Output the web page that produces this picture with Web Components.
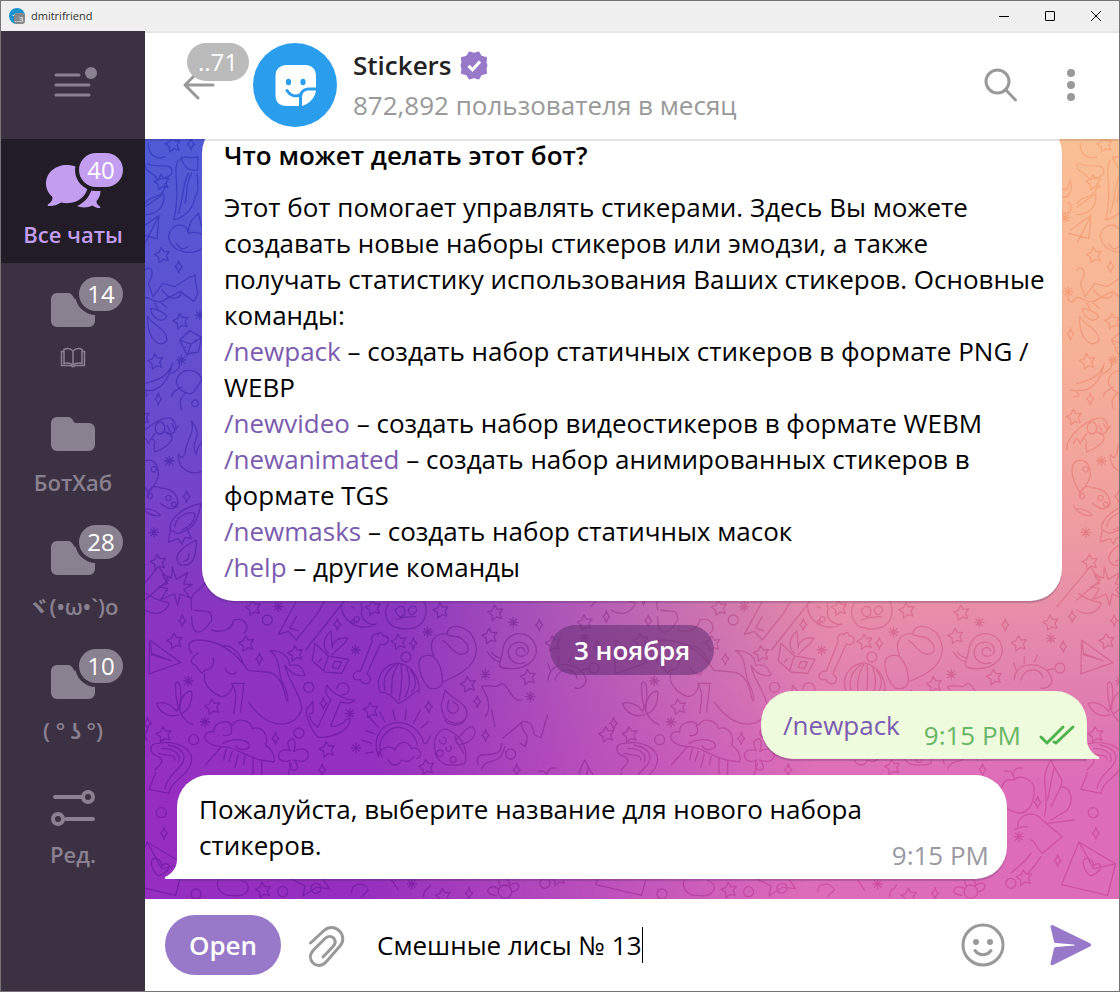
<!DOCTYPE html>
<html lang="ru">
<head>
<meta charset="utf-8">
<meta name="viewport" content="width=device-width, initial-scale=1">
<title>dmitrifriend</title>
<style>
    :root{
        --accent: #9878c8;
        --link: #7b5bb0;
        --muted: #999999;
        --side: #3b3142;
        --side-active: #211c26;
        --side-fg: #8a8190;
        --line: #e6e6e6;
        --text: 26px;
        --row: 36px;
    }
    body{
        margin: 0;
        font-family: "Open Sans", "Noto Sans", "Noto Sans CJK JP", sans-serif;
        font-size: var(--text);
        line-height: var(--row);
        color: #000;
    }
</style>
</head>
<body>
<tg-window>
    <tg-titlebar slot="title">dmitrifriend</tg-titlebar>
    <tg-sidebar slot="side">
        <tg-folder icon="chats" count="40" active>Все чаты</tg-folder>
        <tg-folder icon="folder" count="14"><tg-icon name="book" role="img" aria-label="Книги"></tg-icon></tg-folder>
        <tg-folder icon="folder">БотХаб</tg-folder>
        <tg-folder icon="folder" count="28">ヾ(•ω•`)o</tg-folder>
        <tg-folder icon="folder" count="10">( ° ʖ °)</tg-folder>
        <tg-folder icon="edit">Ред.</tg-folder>
    </tg-sidebar>
    <tg-header slot="head" unread="..71">
        Stickers
        <span slot="status">872,892 пользователя в месяц</span>
    </tg-header>
    <tg-chat>
        <tg-about>
            <span slot="title">Что может делать этот бот?</span>
            Этот бот помогает управлять стикерами. Здесь Вы можете создавать новые наборы стикеров или эмодзи, а также получать статистику использования Ваших стикеров. Основные команды:<br>
            <tg-command>/newpack</tg-command> – создать набор статичных стикеров в формате PNG / WEBP<br>
            <tg-command>/newvideo</tg-command> – создать набор видеостикеров в формате WEBM<br>
            <tg-command>/newanimated</tg-command> – создать набор анимированных стикеров в формате TGS<br>
            <tg-command>/newmasks</tg-command> – создать набор статичных масок<br>
            <tg-command>/help</tg-command> – другие команды
        </tg-about>
        <tg-date>3 ноября</tg-date>
        <tg-message out time="9:15 PM"><tg-command>/newpack</tg-command></tg-message>
        <tg-message time="9:15 PM">Пожалуйста, выберите название для нового набора стикеров.</tg-message>
    </tg-chat>
    <tg-composer slot="foot" value="Смешные лисы № 13"></tg-composer>
</tg-window>

<script>
const icons = {
    app: [16, 16, `<circle cx="8" cy="8" r="8" fill="#1b93d1"/><path d="M3 8l5-3v3z" fill="#fff"/><rect x="5" y="5" width="11" height="11" rx="3" fill="#85898c"/><text x="10" y="14" font-size="8" text-anchor="middle" fill="#fff">..3</text>`],
    minimize: [10, 10, `<path d="M0 5.5h10" stroke="#000" fill="none"/>`],
    maximize: [10, 10, `<rect x=".5" y=".5" width="9" height="9" rx=".5" stroke="#000" fill="none"/>`],
    close: [10, 10, `<path d="M0 0l10 10M10 0L0 10" stroke="#000" fill="none"/>`],
    menu: [38, 38, `<path d="M2 9h23M2 19h33M2 29h33" fill="none" stroke="currentColor" stroke-width="3" stroke-linecap="round"/><circle cx="37" cy="7" r="6" fill="currentColor"/>`],
    chats: [54, 44, `<path fill="currentColor" d="M21 1C9 1 0 9 0 19.500c0 6 3 10.500 6.500 13.500.5 3-1.500 5-4.500 7.500-1 1 0 1.500 1 1.500 5 0 8.500-1 12-3.500 2 .5 4 .7 6 .7 12 0 21-8.500 21-19.200S33 1 21 1z"/><path fill="currentColor" d="M54.500 27c0-2-.5-4-1-5l-7-1c-1 10-8 18-15.500 21 4 2 11 2 15.500-.5 2.500 2 5 2.500 7.500 2.500.5 0 .5-1-.2-1.500-2-1.500-3.500-3-3.300-5.500 2.500-2.500 4-6 4-10z"/>`],
    folder: [44, 34, `<path fill="currentColor" d="M6 0h11c2 0 3 .7 4 2l2 3c.6.700 1 1 2 1h13a6 6 0 0 1 6 6v16a6 6 0 0 1-6 6H6a6 6 0 0 1-6-6V6a6 6 0 0 1 6-6z"/>`],
    edit: [44, 34, `<g fill="none" stroke="currentColor" stroke-width="4" stroke-linecap="round"><path d="M4 8h27M15 30h27"/><circle cx="37" cy="8" r="5"/><circle cx="7" cy="30" r="5"/></g>`],
    book: [26, 20, `<g fill="none" stroke="currentColor" stroke-width="1.500"><path d="M13 3C10 0 6 .5 4 1.500v14c3-1 6-1 9 1.500 3-2.500 6-2.500 9-1.500v-14C20 .5 16 0 13 3zM13 3v14"/><path d="M4 3.500H1.500v14H11c1 1.500 3 1.500 4 0h9.500v-14H22"/></g>`],
    back: [32, 30, `<path d="M30 15H2M15 2L2 15l13 13" fill="none" stroke="#999" stroke-width="3" stroke-linecap="round" stroke-linejoin="round"/>`],
    sticker: [84, 84, `<circle cx="42" cy="42" r="42" fill="#2a9eed"/><path fill="#fff" d="M34 22h18c7 0 11 4 11 11v11.500h-7c-6 0-10 4-10 9.500v9H34c-8 0-11.500-4-11.500-11V33c0-7 4.500-11 11.500-11z"/><path fill="#fff" d="M63 47.500C62 55 56 61 49 63v-8.500c0-4.500 2.500-7 7-7z"/><ellipse cx="35.500" cy="39" rx="2.600" ry="3.300" fill="#2a9eed"/><ellipse cx="50" cy="39" rx="2.600" ry="3.300" fill="#2a9eed"/><path d="M34 47.500c3 5 8 6.500 13 4.500" fill="none" stroke="#2a9eed" stroke-width="3" stroke-linecap="round"/>`],
    verified: [28, 28, `<path fill="var(--accent)" stroke="var(--accent)" stroke-width="2" stroke-linejoin="round" d="M9.500 1.500l4 1.200h1l4-1.200 2.600 4.300 5 1.200-.6 4.500 1 3-1 3 .6 4.500-5 1.200-2.600 4.300-4-1.200h-1l-4 1.200-2.600-4.300-5-1.200.6-4.500-1-3 1-3-.6-4.500 5-1.200z"/><path d="M8.500 14.800l4 4 7.500-8.300" fill="none" stroke="#fff" stroke-width="3.200"/>`],
    search: [34, 34, `<circle cx="13.500" cy="13.500" r="11.500" fill="none" stroke="#999" stroke-width="3"/><path d="M21.500 21.500l10 10.500" stroke="#999" stroke-width="3" stroke-linecap="round"/>`],
    more: [8, 32, `<g fill="#999"><circle cx="4" cy="4" r="4"/><circle cx="4" cy="16" r="4"/><circle cx="4" cy="28" r="4"/></g>`],
    checks: [36, 20, `<path d="M2 12l6 6L24 2M15 17l2 1L34 2" fill="none" stroke="#4fb34e" stroke-width="3" stroke-linecap="round" stroke-linejoin="round"/>`],
    clip: [34, 38, `<path d="M2.500 17L16 4.500c5-4.500 11.500-3.500 15.500.5s4.500 10.500.5 15L18 36c-4.500 5-10 4-13 1s-4-8 .5-13L17 12.500c3-3 6.500-2.500 8.500-.5s2.500 5-.5 8.500L15 31" fill="none" stroke="#999" stroke-width="3" stroke-linecap="round" stroke-linejoin="round"/>`],
    smile: [44, 44, `<circle cx="22" cy="22" r="20" fill="none" stroke="#999" stroke-width="3"/><circle cx="15" cy="19" r="3" fill="#999"/><circle cx="29" cy="19" r="3" fill="#999"/><path d="M14 27.500c4 5.500 12 5.500 16 0" fill="none" stroke="#999" stroke-width="3" stroke-linecap="round"/>`],
    send: [42, 42, `<path fill="var(--accent)" d="M3 1.200L40 19.300c1.500.8 1.500 2.500 0 3.300L3 40.900c-1.500.7-2.800-.3-2.400-2L4 24.500c.3-1 1-1.500 2-1.600l18-1.400c1-.1 1-.9 0-1L6 19c-1-.1-1.700-.5-2-1.600L.6 3.200C.2 1.600 1.500.5 3 1.200z"/>`],
    tailLeft: [12, 20, `<path fill="currentColor" d="M12 0c0 8-4 14-12 18v2h12z"/>`],
    tailRight: [12, 20, `<path fill="currentColor" d="M0 0c0 8 4 14 12 18v2H0z"/>`]
};

class Base extends HTMLElement {
    render(html) {
        this.attachShadow({mode: 'open'}).innerHTML = html;
    }
}

customElements.define('tg-icon', class extends Base {
    constructor() {
        super();
        const [w, h, body] = icons[this.getAttribute('name')];
        this.render(`
        <style>
            :host{ display: inline-block; flex: none; }
            svg{ display: block; overflow: visible; }
        </style>
        <svg width="${w}" height="${h}" viewBox="0 0 ${w} ${h}" aria-hidden="true">${body}</svg>
        `);
    }
});

customElements.define('tg-window', class extends Base {
    constructor() {
        super();
        this.render(`
        <style>
            :host{
                display: grid;
                box-sizing: border-box;
                height: 100vh;
                border: 1px solid #767476;
                grid-template: auto minmax(0, 1fr) / 144px minmax(0, 1fr);
            }
            .top{ grid-column: 1 / -1; }
            main{ display: flex; flex-direction: column; min-height: 0; }
        </style>
        <div class="top"><slot name="title"></slot></div>
        <slot name="side"></slot>
        <main>
            <slot name="head"></slot>
            <slot></slot>
            <slot name="foot"></slot>
        </main>
        `);
    }
});

customElements.define('tg-titlebar', class extends Base {
    constructor() {
        super();
        this.render(`
        <style>
            :host{
                display: flex;
                align-items: center;
                height: 30px;
                padding-left: 8px;
                background: #f0f0f0;
                font-size: 11px;
                line-height: 16px;
                color: #333;
            }
            .name{ flex: 1; margin-left: 6px; }
            button{
                display: grid;
                place-items: center;
                width: 46px;
                height: 28px;
                padding: 0;
                border: 0;
                background: none;
            }
        </style>
        <tg-icon name="app"></tg-icon>
        <span class="name"><slot></slot></span>
        <button aria-label="Свернуть"><tg-icon name="minimize"></tg-icon></button>
        <button aria-label="Развернуть"><tg-icon name="maximize"></tg-icon></button>
        <button aria-label="Закрыть"><tg-icon name="close"></tg-icon></button>
        `);
    }
});

customElements.define('tg-sidebar', class extends Base {
    constructor() {
        super();
        this.render(`
        <style>
            :host{
                display: block;
                background: var(--side);
                color: var(--side-fg);
                overflow: hidden;
            }
            .menu{
                display: grid;
                place-items: center;
                width: 100%;
                height: 108px;
                padding: 0;
                border: 0;
                background: none;
                color: inherit;
            }
        </style>
        <button class="menu" aria-label="Меню"><tg-icon name="menu"></tg-icon></button>
        <nav><slot></slot></nav>
        `);
    }
});

customElements.define('tg-folder', class extends Base {
    constructor() {
        super();
        const count = this.getAttribute('count');
        this.render(`
        <style>
            :host{ display: block; --bg: var(--side); }
            :host([active]){ --bg: var(--side-active); color: #c39df0; }
            button{
                position: relative;
                display: flex;
                flex-direction: column;
                align-items: center;
                width: 100%;
                height: 124px;
                padding: 24px 0 0;
                border: 0;
                background: var(--bg);
                color: inherit;
                font: inherit;
            }
            .icon{ display: grid; place-items: center; height: 46px; }
            .label{
                display: grid;
                place-items: center;
                height: 28px;
                margin-top: 11px;
                font-size: 22px;
                line-height: 28px;
                font-weight: 600;
                white-space: nowrap;
            }
            .count{
                position: absolute;
                top: 14px;
                left: 78px;
                min-width: 44px;
                box-sizing: border-box;
                border-radius: 17px;
                background: var(--side-fg);
                color: #fff;
                font-size: 24px;
                line-height: 34px;
                font-weight: 500;
                box-shadow: 0 0 0 4px var(--bg);
            }
            :host([active]) .count{ background: #c39df0; }
        </style>
        <button>
            <span class="icon"><tg-icon name="${this.getAttribute('icon')}"></tg-icon></span>
            <span class="label"><slot></slot></span>
            ${count ? `<span class="count">${count}</span>` : ''}
        </button>
        `);
    }
});

customElements.define('tg-header', class extends Base {
    constructor() {
        super();
        this.render(`
        <style>
            :host{
                display: flex;
                align-items: center;
                flex: none;
                box-sizing: border-box;
                height: 108px;
                padding: 0 20px 2px 0;
                border-top: 2px solid var(--line);
                background: #fff;
            }
            button{
                display: grid;
                place-items: center;
                height: 72px;
                padding: 0;
                border: 0;
                background: none;
            }
            .back{
                position: relative;
                width: 108px;
                font: inherit;
            }
            .unread{
                position: absolute;
                top: -6px;
                left: 42px;
                width: 62px;
                border-radius: 19px;
                background: #bbb;
                color: #fff;
                font-size: 24px;
                line-height: 38px;
                font-weight: 500;
            }
            .who{ flex: 1; min-width: 0; margin-left: 16px; white-space: nowrap; }
            .name{
                display: flex;
                align-items: center;
                gap: 8px;
                margin-bottom: 4px;
                font-weight: 600;
                color: #222;
            }
            .status{ color: var(--muted); }
            .search{ width: 84px; }
            .more{ width: 56px; }
        </style>
        <button class="back" aria-label="Назад">
            <tg-icon name="back"></tg-icon>
            <span class="unread">${this.getAttribute('unread')}</span>
        </button>
        <tg-icon name="sticker"></tg-icon>
        <div class="who">
            <div class="name"><span><slot></slot></span><tg-icon name="verified"></tg-icon></div>
            <div class="status"><slot name="status"></slot></div>
        </div>
        <button class="search" aria-label="Поиск"><tg-icon name="search"></tg-icon></button>
        <button class="more" aria-label="Ещё"><tg-icon name="more"></tg-icon></button>
        `);
    }
});

// wallpaper marks, three units to a pixel; one tile is 1398 units wide
const marks = {
    star: [[90,150],[305,157],[325,50],[452,187],[203,347],[57,430],[685,50],[762,152],[888,58],[1052,65],[1035,135],[970,280],[1150,258],[678,357],[547,475],[845,528],[355,897],[1225,157],[1320,95],[51,-1227],[52,-1008],[108,-810],[32,-689],[84,-1340],[40,-87],[1390,-522],[1385,430],[1240,860],[895,915]],
    burst: [[400,50],[130,273],[180,396],[632,180],[848,126],[615,370],[633,474],[1021,253],[1105,97],[1156,320],[800,882],[1320,145],[109,-690],[165,-825],[73,-387],[27,-173],[1363,-1117],[1372,-895],[1224,740]],
    spark: [[112,92],[343,207],[577,103],[805,160],[535,340],[391,445],[851,350],[997,335],[1022,436],[1183,105],[532,540],[57,730],[1115,540],[972,910],[8,400],[1357,170],[1280,637],[1340,812],[138,-1338],[101,-970],[40,-573],[125,-280],[1379,-768],[1384,80]],
    ring: [[367,90],[491,292],[462,429],[783,201],[146,449],[1097,492],[49,668],[513,895],[413,905],[153,912],[1347,234],[1200,880]]
};

const doodles = [
    // plane, sprig, snake
    'M14 150L108 218 12 252zM14 150l6 40 58 22-60-18',
    'M144 404C110 390 90 350 92 280c20-20 20 60 4 80M96 366c-20-30-50-30-62-26 10 30 40 44 68 34M104 362c0-40 20-60 36-58 4 30-10 60-30 66',
    'M30 540c20-20 30-30 10-40-30-10-30-40 0-40 60-10 110 20 98 60-10 40-60 50-66 90l-60-12 20-50M40 490c30 10 50 0 50 20M50 475c40 0 60 20 50 40M70 465c50 10 60 40 30 70-20 20-36 36-40 60',
    // mermaid
    'M140 190c-20-30 0-40 20-40 50 0 100 20 150 92 60 6 90-10 110 70 6 40 20 20-10-40-10-30-4-70-36-90 40 0 60 20 60 44 30-6 40 10 46 30-20 4-40 0-60-30 10 50 50 90 50 130-10 50-90 80-160-20M160 190c-20 10-30 30-10 34l20 26 10-10c20 0 30-20 24-36M180 250c-10 30 20 60 50 70 20 0 30-20 36-40M240 236c10 20 30 20 34 10M300 280h-40c20 30 10 60 6 90M296 280c0 40-10 60-8 86M230 170c20-10 50 10 66 52',
    // cloud with rain
    'M236 470c-40 0-60-20-56-34 8-16 24-10 26-10 0-30 40-40 56-20 20-30 60-10 60 10 30-10 50 20 40 50 20 10 30 40 24 50l-40-6c-40-10-80-40-110-40M256 406c10 20 0 34-20 30M234 460c40-20 80-10 80 10-10 14-40 10-40-4M230 470l-48 54M244 476l-8 34M262 484l-10 30M280 492l-10 40M300 498l-4 26M324 506v46M350 514v40',
    // flag, moon
    'M600 30L482 180M456 30L400 134l30-10 24 26 64-80 20-36M454 80l-20 34 24 8',
    'M590 40c-6 50 50 90 104 62-20 6-50-10-44-42 8-6-6-10 0-20M620 50l8 4M634 80a8 8 0 1 0 2 0M624 90a5 5 0 1 0 1 0',
    // pumpkin, card, bone
    'M730 40c-20 30 0 70 30 74 20 6 60 4 74-20 14-20 10-50 2-60M750 60c20-20 30-10 30 10-10 16-20 14-30-10zM790 60c10-20 30-10 24 4-8 8-16 20-24-4zM752 90c20-10 50-10 60-10',
    'M510 160l40 38 62 10-22 42-50-4-38-34zM550 198l-14 44M530 206l-10 10M570 214l20 2-10 20-18-4zM550 190c-20-20-14-50 8-66 4 20 0 30 4 50 0-20 20-34 46-30-6 20-30 30-46 50',
    'M700 134c-10-8-26 6-18 20l-36 90c-10-4-26 6-20 20 4 8 14 6 20 4 0 10 20 20 28 8 6-10 0-18-8-24l40-90c10 4 22 0 24-10 2-12-10-16-16-14 0-12-12-14-14-4z',
    // shell, glove, snail
    'M706 306c-20-50 20-90 60-86 40 10 60 50 56 90M706 306c20 0 40 16 54 34 20-4 40-30 62-40M720 300c-10-40 10-60 30-76M740 312c0-40 0-60 20-90M762 330c10-40 10-70 6-108M780 320c20-30 16-60 4-92M800 306c20-20 10-50-4-66',
    'M822 220c0-20 20-28 42-22 20 20 30 50 28 80-8 20-24 20-40 16-20-20-30-50-30-74zM866 198c-20-50 10-70 40-66 4-30 40-30 70-4 40 60 14 110-80 146M906 134c20 10 40 0 52 20 20 20 14 40-14 38-30-10-30-30-50-40',
    'M1064 226c0-20 10-30 10-50 10-60 90-60 100 0 4 40-40 60-70 60-20 0-40 0-40-10M1140 184c-6-20-30-10-26 4 4 20 40 10 36-10-4-30-60-30-60 10 0 20 20 40 50 30M1064 216c-20-4-30-20-36-30M1070 206c-20-6-24-10-30-20',
    // anchor, sun, mushroom
    'M576 296a18 18 0 1 1 14 18M546 286c10 20 50 44 84 44-10 12-30 10-44 6l-30 74c20 0 40-10 46-20l12-6c6 30-40 60-94 58-20-20-38-60-36-82l20-26v34l-10 4c0 20 10 30 24 40l40-84c-10-6-20-20-12-42z',
    'M700 500c-20-60 10-100 60-102 40 0 70 30 76 60 10 10 14-10 20-20M710 500c-20-50 20-90 54-88 30 4 50 30 54 56M700 500c0-30 40-36 50-20 10-30 40-30 50-4 20-10 40 20 16 30M730 510c10 20 30 20 40 0 20 10 30 0 36-10M750 390l-6-30M780 390l4-30M806 400l20-40M830 414l20-20M720 396l-16-30M700 412l-30-34M690 432l-28-10M680 460l-30-10M684 486l-24 4',
    'M870 480c-10-40 20-70 40-60 40 20 60 50 50 100-20 8-60 8-70-4-14-10-20-20-20-36zM930 440c0 20 20 30 26 50M930 450c20-10 30-40 52-40 20 20 0 50-42 54M884 450a10 10 0 1 0 10-8M904 472a8 8 0 1 0 10-4M884 480a10 10 0 1 0 1 0M924 500a9 9 0 1 0 1 0',
    // clover, garlic, kingfisher, snakes
    'M436 510c-20 10-40 0-34-20 8-16 24-10 34-8-10-20-10-30 0-32 10-14 20 10 10 34 20-10 44-10 44 10 0 20-20 24-44 16 20 20 10 34-4 30-10-4-10-20-6-30zM440 520c-6 20-12 30-10 40',
    'M900 300c0 20-20 40-6 70 10 40 70 40 72 0 0-30-40-40-66-70zM912 330c-10 30 0 40 14 40 20-10 20-20-2-36M900 390c10 20 50 20 60 0',
    'M1074 444l60-50c20 0 30 10 34 40l20 10 20-70M1130 400c0 40 30 20 10 70l-14-10M1000 524c-20-60 70 0 70-64M1010 536c20-40 50 0 70-66M1020 380c20-20 10-60-10-90 30-10 40 10 60-10 20 0 30 60 60 50M1040 360l10 50',
    // thorn ring, apple, bird
    'M1210 270c0-60 90-60 110-10 10 20-10 40-30 34M1230 270c10-40 60-40 66-6M1216 240l-8-20M1240 220v-20M1270 216l10-20M1310 240l20-4',
    'M1210 570c20-20 60 0 60 30 0 40-20 80-60 66-40-10-50-60-30-90 10-10 20-6 30-6zM1210 570c0-20-10-30-30-26M1204 556c10-30 20-20 30-22',
    'M1220 710c0-40 50-50 74-20l60 50-60 50c-30-30-20-40-34-40M1210 720c10-6 20-10 40-10M1300 680c20-70-20-110 20-170 20 50 40 50 30 80 30 0 40 40 20 70M1330 530l-20 100M1350 590l-30 60M1370 660l-50 30M1390 690l-80 10M1260 790c-20 30-40 40-60 60M1290 800c-20 30-20 30-40 50',
    // envelope, lower flowers, wings
    'M-46 884L6 756l110 66-24 94zM6 756l44 80 66-14M22 832c-14-40 30-30 28-4 20-20 40 10-8 30-10-4-16-14-20-26z',
    'M1060 905a20 20 0 1 0 40 0a20 20 0 1 0-40 0M1066 886c-20-30 30-30 28 0 30-20 40 10 10 20M1060 896c-30-20-50 20-6 20M220 870c-10 20 10 50 40 46 60 10 60-40 30-44M440 868l40 20-6 30 40-26 40 4-20-28M620 906c0-30 40-30 50-6l-20 20M740 870l20 30M836 920c0-30 20-20 20-36',
    'M140 60c-10-60 20-50 40-80M150 60c30 10 50-10 50 30-30 50-60 50-60-10M200 120c30 10 60 0 66-30 40-10 50 30 30 40M0 60c30 20 60 10 74-20-20-10-40-4-70-30M-60 50l100-120 30 40-70 60',
    // upper strip: necklace, dove, leaf
    'M10-1340c0 40 30 50 50 40M8-1280c20 20 80-10 72 30-14 20-30 10-40 20-20-30-40-20-40-50M108-1290c10-20 20 0 50-10v40c-20 4-40 0-50-40zM100-1290c-20 30 10 90-14 180 40-10 60-40 64-70 10-10 10-30 6-70M100-1130c20-60 10-80 30-120M120-1160c10-40 0-60 20-90',
    'M0-1150l56-38c4 30-10 60-56 62M-20-1080l62-44-6 70-60-16M42-1124l-40 80M70-1060c10-50 60-40 60-10 40-10 60 10 50 40-40 30-100 20-110-30zM130-1070c0-30 10-40 30-60l10 40M94-1040c14 20 20 20 34 10',
    // handshake, drops, dice
    'M0-960c20-20 30 10 10 40l14 40 30-40 36 10 40-26c10-10 16 0 20-10 0 50 20 50-4 80l-40-30-56 30c-20 10-40-20-54-10-10 20-30 10-20-10M50-900l20 20c20 10 40 0 36-10M30-860l10 20M50-860l16 14',
    'M16-844c10 0 50 10 48 26-16 20-44 0-48-26zM8-820c10 20 60 40 58 70-20 30-60 0-58-70zM104-750l30-28 36 20-10 44-36 6zM104-750l34 12 32-20M138-738l-12 36M120-728h2M150-750h2',
    // saber, octopus, ribbon
    'M0-620c40-10 70-20 82-60-10 50-40 90-82 80M-20-600c20 0 40 20 10 20M94-620c0-50 70-50 76-10l-20 30c-10 20-40 10-56-20zM80-650c20-10 30-20 20-40M80-580c0-20 20-20 30-30M110-540c-10-30 0-40 10-50M150-570a10 10 0 1 0 1 0',
    'M-30-420c-10-40 80-110 110-94 30 30 0 60-20 40 40 10 20 40-30 60-10-30 10-30-10-40M-10-440c10-20 10-20 20 0 10-20 10-20 20-30M44-504a14 18 0 1 0 2 0M66-494l10 20M80-500l10 20M90-480l10-12',
    // flame, butterfly, rosebud
    'M140-506c40 50-10 60 14 100 0-30 20-30 20-50 10 40 30 50 14 90-40 30-90 10-88-40 20 20 10 0 20 0 0-40 30-60 20-100z',
    'M10-290c-30-50-30-80-14-96 20-10 40 0 44 30 4 20-10 40-26 60M10-280c0-40 30-30 36-26 40 0 60 30 50 56-20 10-20 10-50-10M14-290a8 8 0 1 0 1 0M26-370a8 8 0 1 0 1 0M70-284a8 8 0 1 0 1 0M86-264a7 7 0 1 0 1 0M0-244c20 0 40 10 46 20-20 6-50-10-56-30',
    'M76-180c-10-30 40-70 92-80-10 50-20 80-70 90zM90-190c0-20 30-50 60-40M110-180c20-10 40-20 40-50M76-180l-6 36 30-10 10 16 10-20 20 4-14-30M154-150c0 50-10 80-44 76-30-20-10-50 44-76zM132-110c0 20-6 20-16 24',
    // spiky burst, notes
    'M82-70l12 38 34-20-12 34 26 2-26 14 20 26-30-12-8 34-10-34-40 16 20-32-26-6 26-10-16-26 28 10zM1377-1230c10 20 0 60-30 50-10-10 10-30 20-20zM1398-1160c20-30 60-10 60-60M1350-1160a18 18 0 1 0 20-4'
];

customElements.define('tg-wallpaper', class extends Base {
    constructor() {
        super();
        const uses = Object.entries(marks).map(([name, list]) =>
            list.map(([x, y]) => `<use href="#${name}" x="${x}" y="${y}"/>`).join('')).join('');
        const tiles = [-1, 0, 1, 2, 3].map(n => `<use href="#tile" x="${n * 1398}"/>`).join('');
        this.render(`
        <style>
            :host{
                display: block;
                isolation: isolate;
                background: linear-gradient(#4f5bd5, #6a4bcc 38%, #8a35c0 62%, #962fbf 85%);
            }
            .warm, svg{ position: absolute; inset: 0; width: 100%; height: 100%; }
            .warm{
                background: linear-gradient(#fabf95, #f6b297 28%, #ef9d9f 50%, #e283af 70%, #dd6cb9 85%);
                -webkit-mask-image: linear-gradient(96deg, transparent 28%, #000 70%);
                mask-image: linear-gradient(96deg, transparent 28%, #000 70%);
            }
            svg{ mix-blend-mode: soft-light; opacity: .45; }
        </style>
        <div class="warm"></div>
        <svg aria-hidden="true">
            <defs>
                <path id="star" d="M-3-20l8 13 16-1-9 13 6 15-15-4-13 10-1-16-13-9 14-6z"/>
                <path id="burst" d="M0-14v28M-14 0h28M-10-10l20 20M10-10l-20 20"/>
                <path id="spark" d="M0-18q3 14 11 18q-8 4-11 18q-3-14-11-18q8-4 11-18z"/>
                <circle id="ring" r="15"/>
                <g id="tile">${uses}<path d="${doodles.join('')}"/></g>
            </defs>
            <g transform="translate(0 451) scale(.3333)" fill="none" stroke="#000" stroke-width="4" stroke-linejoin="round" stroke-linecap="round">${tiles}</g>
        </svg>
        `);
    }
});

customElements.define('tg-chat', class extends Base {
    constructor() {
        super();
        this.render(`
        <style>
            :host{
                position: relative;
                display: flex;
                flex: 1;
                flex-direction: column;
                justify-content: flex-end;
                min-height: 0;
                overflow: hidden;
            }
            tg-wallpaper{ position: absolute; inset: 0; }
            .edge{ position: absolute; inset: 0 0 auto; height: 2px; background: rgba(0, 0, 0, .1); }
            .list{
                position: relative;
                display: flex;
                flex-direction: column;
                gap: 16px;
                padding: 0 32px 20px;
            }
        </style>
        <tg-wallpaper></tg-wallpaper>
        <div class="list"><slot></slot></div>
        <div class="edge"></div>
        `);
    }
});

customElements.define('tg-command', class extends Base {
    constructor() {
        super();
        this.render(`
        <style>
            a{ color: var(--link); text-decoration: none; }
        </style>
        <a href="#"><slot></slot></a>
        `);
    }
});

customElements.define('tg-about', class extends Base {
    constructor() {
        super();
        this.render(`
        <style>
            :host{
                display: block;
                align-self: center;
                box-sizing: border-box;
                max-width: 860px;
                margin-bottom: 8px;
                padding: 16px 16px 16px 22px;
                border-radius: 32px;
                background: #fff;
                box-shadow: 0 2px 1px rgba(60, 40, 80, .25);
            }
            h2{ margin: 0 0 16px; font-size: inherit; font-weight: 600; }
        </style>
        <h2><slot name="title"></slot></h2>
        <slot></slot>
        `);
    }
});

customElements.define('tg-date', class extends Base {
    constructor() {
        super();
        this.render(`
        <style>
            :host{
                display: block;
                align-self: center;
                padding: 0 24px;
                border-radius: 25px;
                background: rgba(105, 50, 120, .6);
                color: #fff;
                font-weight: 600;
                line-height: 50px;
            }
        </style>
        <slot></slot>
        `);
    }
});

customElements.define('tg-message', class extends Base {
    constructor() {
        super();
        const out = this.hasAttribute('out');
        this.render(`
        <style>
            :host{
                position: relative;
                display: grid;
                align-self: flex-start;
                box-sizing: border-box;
                max-width: 830px;
                padding: 16px 18px 16px 22px;
                border-radius: 32px 32px 32px 0;
                background: #fff;
                box-shadow: 0 2px 1px rgba(60, 40, 80, .25);
            }
            :host([out]){
                align-self: flex-end;
                grid-template-columns: auto auto;
                gap: 24px;
                padding-right: 12px;
                border-radius: 32px 32px 0 32px;
                background: #effbdd;
            }
            .text, .time{ grid-area: 1 / 1; }
            .time{
                display: flex;
                align-items: center;
                gap: 18px;
                align-self: end;
                justify-self: end;
                margin-bottom: -10px;
                color: #9a98a2;
            }
            :host([out]) .time{ grid-area: 1 / 2; color: #68b566; }
            .tail{ position: absolute; bottom: 0; left: -12px; color: #fff; }
            :host([out]) .tail{ left: auto; right: -12px; color: #effbdd; }
        </style>
        <div class="text"><slot></slot></div>
        <div class="time">${this.getAttribute('time')}${out ? '<tg-icon name="checks"></tg-icon>' : ''}</div>
        <tg-icon class="tail" name="${out ? 'tailRight' : 'tailLeft'}"></tg-icon>
        `);
    }
});

customElements.define('tg-composer', class extends Base {
    constructor() {
        super();
        this.render(`
        <style>
            :host{
                display: flex;
                align-items: center;
                flex: none;
                height: 92px;
                padding: 0 16px 0 20px;
                background: #fff;
            }
            button{
                display: grid;
                place-items: center;
                width: 88px;
                height: 60px;
                padding: 0;
                border: 0;
                background: none;
                font: inherit;
            }
            .open{
                width: 116px;
                border-radius: 30px;
                background: var(--accent);
                color: #fff;
                font-weight: 600;
            }
            .field{ display: flex; align-items: center; flex: 1; min-width: 0; margin-left: 8px; }
            input{
                field-sizing: content;
                min-width: 0;
                padding: 0;
                border: 0;
                outline: 0;
                background: none;
                font: inherit;
                color: #000;
            }
            .caret{ width: 1px; height: 36px; background: #000; }
            .smile{ width: 112px; }
            .send{ width: 64px; }
        </style>
        <button class="open">Open</button>
        <button class="clip" aria-label="Прикрепить"><tg-icon name="clip"></tg-icon></button>
        <div class="field">
            <input type="text" aria-label="Сообщение" value="${this.getAttribute('value')}">
            <span class="caret"></span>
        </div>
        <button class="smile" aria-label="Эмодзи"><tg-icon name="smile"></tg-icon></button>
        <button class="send" aria-label="Отправить"><tg-icon name="send"></tg-icon></button>
        `);
    }
});
</script>
</body>
</html>
